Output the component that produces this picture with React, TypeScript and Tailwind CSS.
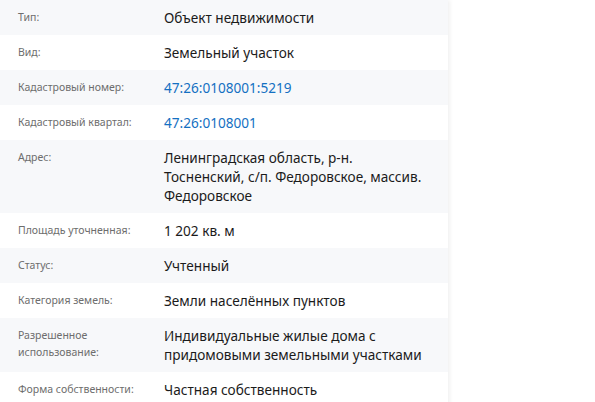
const rows: { label: string; value: string; link?: boolean }[] = [
  { label: 'Тип:', value: 'Объект недвижимости' },
  { label: 'Вид:', value: 'Земельный участок' },
  { label: 'Кадастровый номер:', value: '47:26:0108001:5219', link: true },
  { label: 'Кадастровый квартал:', value: '47:26:0108001', link: true },
  { label: 'Адрес:', value: 'Ленинградская область, р-н. Тосненский, с/п. Федоровское, массив. Федоровское' },
  { label: 'Площадь уточненная:', value: '1 202 кв. м' },
  { label: 'Статус:', value: 'Учтенный' },
  { label: 'Категория земель:', value: 'Земли населённых пунктов' },
  { label: 'Разрешенное использование:', value: 'Индивидуальные жилые дома с придомовыми земельными участками' },
  { label: 'Форма собственности:', value: 'Частная собственность' },
];

export default function App() {
  return (
    <div className="h-[402px] w-[595px] overflow-hidden bg-white font-['Noto_Sans',sans-serif]">
      <div className="w-[448px] shadow-[2px_0_4px_rgba(0,0,0,0.06)]">
        {rows.map((r, i) => (
          <div key={i} className={`flex py-2 pl-[18px] pr-4 ${i % 2 === 0 ? 'bg-[#f7f8fa]' : 'bg-white'}`}>
            <div className="w-[146px] shrink-0 pr-4 pt-[1px] text-[10.5px] leading-[17px] text-[#6d6d6d]">{r.label}</div>
            <div className={`flex-1 text-[13.6px] leading-[19px] ${r.link ? 'text-[#1470c2]' : 'text-[#1b1b1b]'}`}>
              {r.value}
            </div>
          </div>
        ))}
      </div>
    </div>
  );
}
